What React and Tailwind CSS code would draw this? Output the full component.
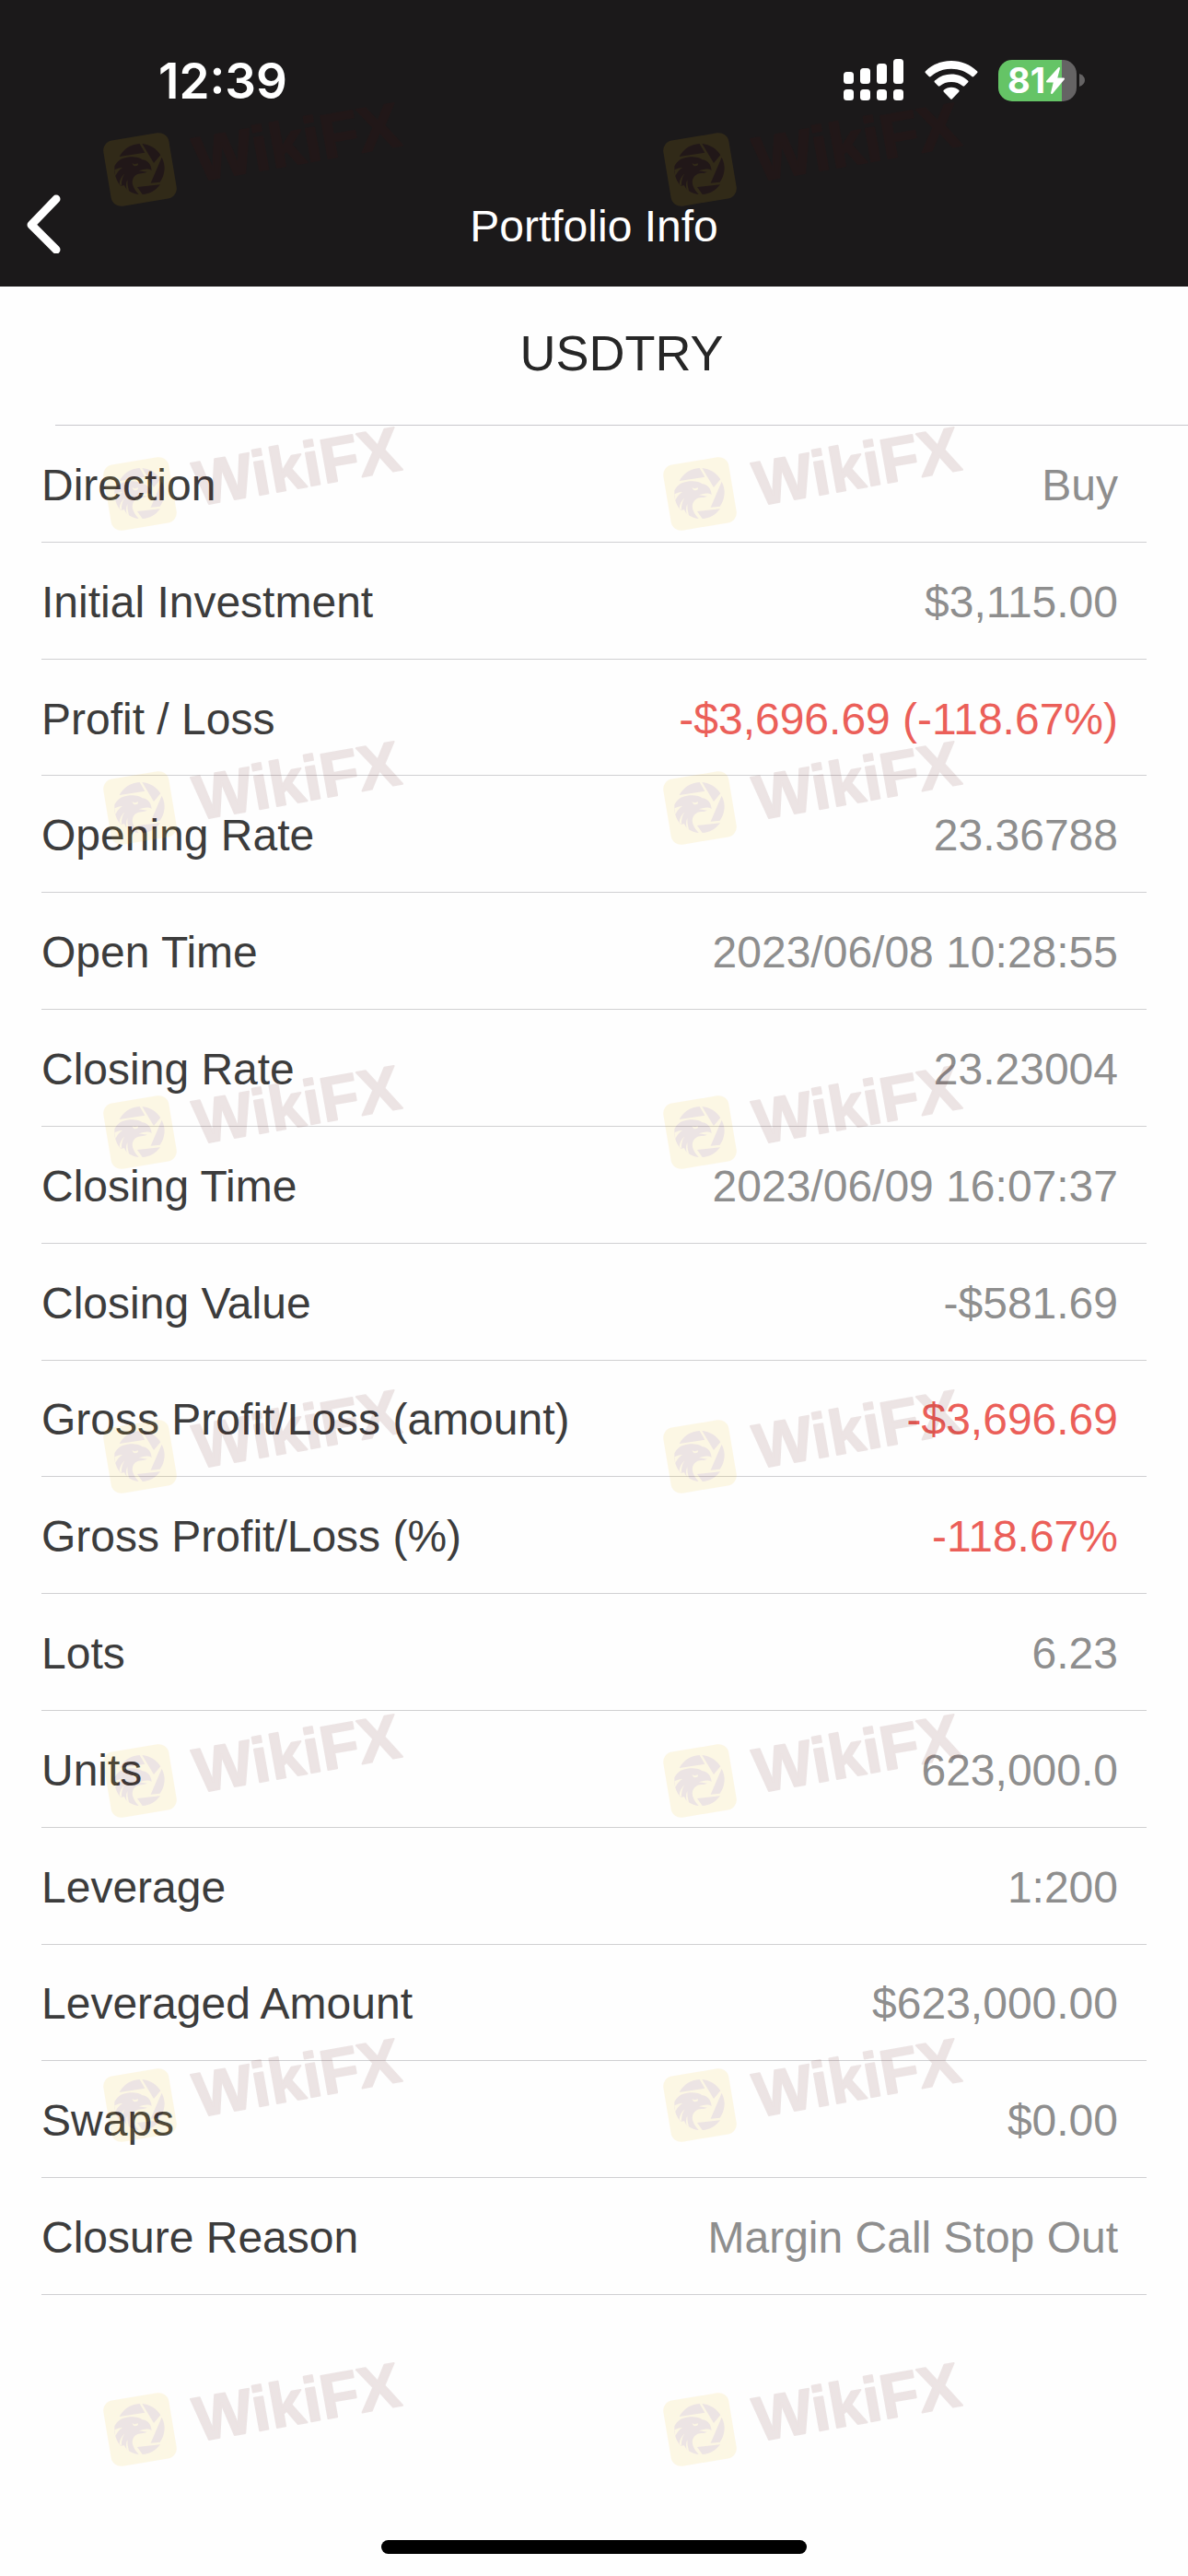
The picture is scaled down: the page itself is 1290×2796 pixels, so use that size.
import React from 'react';
import clsx from 'clsx';

const rows = [
  { label: 'Direction', value: 'Buy' },
  { label: 'Initial Investment', value: '$3,115.00' },
  { label: 'Profit / Loss', value: '-$3,696.69 (-118.67%)', loss: true },
  { label: 'Opening Rate', value: '23.36788' },
  { label: 'Open Time', value: '2023/06/08 10:28:55' },
  { label: 'Closing Rate', value: '23.23004' },
  { label: 'Closing Time', value: '2023/06/09 16:07:37' },
  { label: 'Closing Value', value: '-$581.69' },
  { label: 'Gross Profit/Loss (amount)', value: '-$3,696.69', loss: true },
  { label: 'Gross Profit/Loss (%)', value: '-118.67%', loss: true },
  { label: 'Lots', value: '6.23' },
  { label: 'Units', value: '623,000.0' },
  { label: 'Leverage', value: '1:200' },
  { label: 'Leveraged Amount', value: '$623,000.00' },
  { label: 'Swaps', value: '$0.00' },
  { label: 'Closure Reason', value: 'Margin Call Stop Out' },
];

const SignalIcon = () => (
  <svg width="66" height="46" viewBox="0 0 66 46" fill="#fff" aria-hidden="true">
    <rect x="0" y="14" width="11" height="13" rx="3.5" />
    <rect x="18" y="10" width="11" height="17" rx="3.5" />
    <rect x="36" y="5" width="11" height="22" rx="3.5" />
    <rect x="54" y="0" width="11" height="27" rx="3.5" />
    <rect x="0" y="33" width="11" height="12" rx="3.5" />
    <rect x="18" y="33" width="11" height="12" rx="3.5" />
    <rect x="36" y="33" width="11" height="12" rx="3.5" />
    <rect x="54" y="33" width="11" height="12" rx="3.5" />
  </svg>
);

const WifiIcon = () => (
  <svg width="58" height="44" viewBox="0 0 58 44" fill="#fff" aria-hidden="true">
    <path d="M29 1C40 1 49.500 5 57 12.200Q58 13.200 57 14.200L53.300 18Q52.300 18.900 51.300 18C45 12.500 37.500 9.700 29 9.700S13 12.500 6.700 18Q5.700 18.900 4.700 18L1 14.200Q0 13.200 1 12.200C8.500 5 18 1 29 1Z" />
    <path d="M29 15.500C36 15.500 42 18 47 22.600Q48 23.600 47 24.600L43.300 28.300Q42.300 29.200 41.300 28.300C38 25.400 34 23.900 29 23.900S20 25.400 16.700 28.300Q15.700 29.200 14.700 28.300L11 24.600Q10 23.600 11 22.600C16 18 22 15.500 29 15.500Z" />
    <path d="M29 29.700C32.200 29.700 34.900 30.800 37.200 32.700Q38.200 33.700 37.200 34.700L30 42.200Q29 43.200 28 42.200L20.800 34.700Q19.800 33.700 20.800 32.700C23.100 30.800 25.800 29.700 29 29.700Z" />
  </svg>
);

const BatteryIcon = () => (
  <div className="flex items-center gap-[3px]">
    <div className="flex h-[45px] w-[85px] items-center rounded-[15px] bg-linear-to-r from-[#65c466] from-81% to-[#656364] to-81% pl-[10px] text-white">
      <span className="font-[Inter,sans-serif] text-[38px] leading-[45px] font-bold">81</span>
      <svg className="shrink-0" width="22" height="31" viewBox="0 0 22 31" aria-label="Charging">
        <path d="M15 2L2 16.500H10L7 29L20 13.500H12Z" fill="#fff" stroke="#fff" strokeWidth="2" strokeLinejoin="round" />
      </svg>
    </div>
    <svg width="6" height="14" viewBox="0 0 6 14" fill="#656364" aria-hidden="true">
      <path d="M0 0C4 1.500 6 4 6 7S4 12.500 0 14Z" />
    </svg>
  </div>
);

// Tilted brand mark: eagle inside a camera shutter, next to the word mark
const Watermark = () => (
  <svg className="block w-[360px] shrink-0 overflow-visible opacity-10" height="130" viewBox="0 0 360 130">
    <g transform="translate(62 86)">
      <rect x="-36" y="-36" width="72" height="72" rx="11" fill="#f4bc10" transform="rotate(-9.500)" />
      <g transform="scale(0.333) translate(-142 -139)">
        <g fill="#560808">
          <path d="M141 55L158 84L75 97C88 72 112 57 141 55Z" />
          <path d="M149 55C174 58 196 70 209 92L187 118Z" />
          <path d="M213 99C228 128 223 157 207 180L177 183Z" />
          <path d="M208 188C193 208 173 219 150 220L133 196Z" />
          <path d="M59 128C66 114 80 101 100 99C120 96 140 98 150 107C165 108 178 120 180 142C172 136 160 137 150 140L138 143L166 147C153 153 138 150 130 156C118 164 114 178 120 193C124 205 133 214 138 220C124 218 113 214 104 207C98 204 94 198 92 192C90 190 84 192 80 193C65 177 58 155 59 136Z" />
        </g>
        <path d="M116 119Q126 124 135 119L136 124Q128 130 121 126ZM59 140Q74 132 86 132Q70 142 62 160ZM75 186Q76 168 92 152Q80 172 82 193ZM99 205Q94 188 101 172Q100 192 106 209Z" fill="#f4bc10" />
      </g>
    </g>
    <text
      transform="translate(125 99) rotate(-10)"
      fill="#560808"
      stroke="#560808"
      strokeWidth="2"
      strokeLinejoin="round"
      fontSize="68"
      fontWeight="700"
      fontFamily="'Liberation Sans', Arial, sans-serif"
    >
      WikiFX
    </text>
  </svg>
);

const WatermarkLayer = () => (
  <div className="pointer-events-none absolute inset-0 flex flex-col overflow-hidden pt-[98px]" aria-hidden="true">
    {[0, 1, 2, 3, 4, 5, 6, 7].map((line) => (
      <div key={line} className={clsx('flex shrink-0 gap-[248px] pl-[90px]', line === 1 ? 'h-[341px]' : 'h-[352px]')}>
        <Watermark />
        <Watermark />
      </div>
    ))}
  </div>
);

const StatusBar = () => (
  <div className="flex h-[174px] items-center justify-between pr-[112px] pl-[172px]">
    <time className="pt-[2px] font-[Inter,sans-serif] text-[53px] leading-none font-semibold">12:39</time>
    <div className="flex items-center gap-[22px]">
      <SignalIcon />
      <WifiIcon />
      <BatteryIcon />
    </div>
  </div>
);

const NavBar = () => (
  <div className="grid h-[137px] grid-cols-[1fr_auto_1fr] items-center">
    <button type="button" aria-label="Back" className="ml-[28px] w-fit cursor-pointer">
      <svg width="40" height="64" viewBox="0 0 40 64" fill="none" stroke="#fff" strokeWidth="9" strokeLinecap="round" strokeLinejoin="round">
        <path d="M33 5L6 33L33 60" />
      </svg>
    </button>
    <h1 className="pt-[6px] text-[48px] leading-none">Portfolio Info</h1>
  </div>
);

const App = () => (
  <div className="relative flex min-h-screen flex-col bg-[#fefefe] font-['Liberation_Sans',Arial,sans-serif]">
    <header className="bg-[#1b191a] text-white">
      <StatusBar />
      <NavBar />
    </header>

    <main className="flex-1">
      <div className="ml-[60px] flex h-[151px] items-center justify-center border-b border-[#c8c7cc] pb-[6px]">
        <h2 className="text-[54px] leading-none text-[#262626]">USDTRY</h2>
      </div>
      <dl className="mx-[45px] grid min-h-[2029px] auto-rows-fr text-[48px] leading-none">
        {rows.map((row) => (
          <div key={row.label} className="flex items-center justify-between border-b border-[#d0d0d2] pt-[4px] pr-[31px]">
            <dt className="text-[#3c3c3c]">{row.label}</dt>
            <dd className={clsx(row.loss ? 'text-[#eb5f59]' : 'text-[#8e8e8e]')}>{row.value}</dd>
          </div>
        ))}
      </dl>
    </main>

    <footer className="flex justify-center pb-[24px]">
      <div className="h-[15px] w-[462px] rounded-full bg-black" />
    </footer>

    <WatermarkLayer />
  </div>
);

export default App;
